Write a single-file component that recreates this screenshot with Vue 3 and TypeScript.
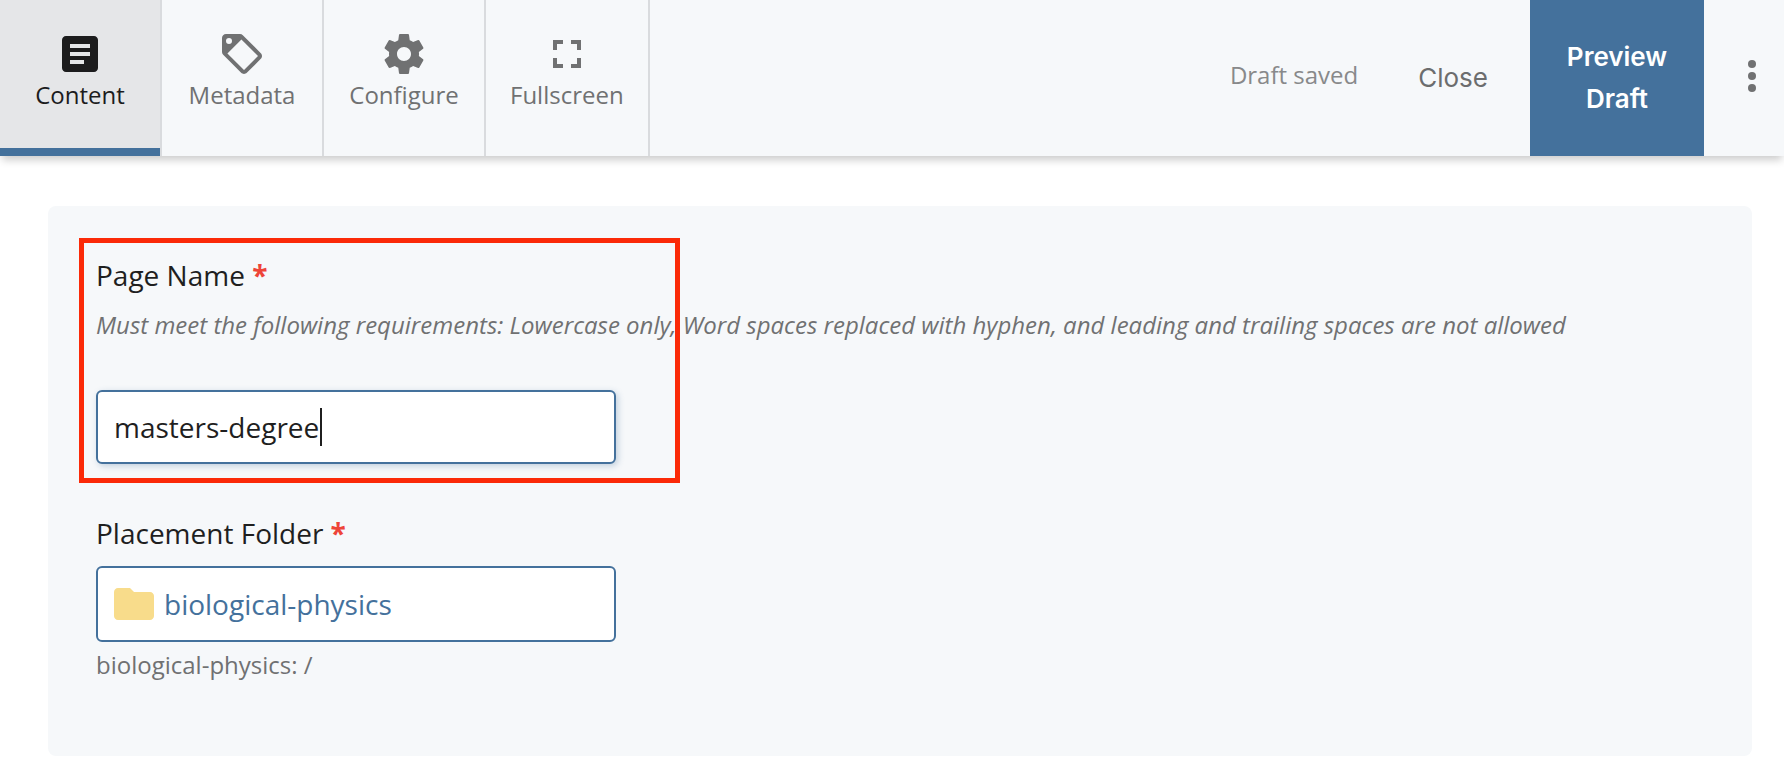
<script setup lang="ts">
import { ref } from 'vue'

interface Tab {
  id: string
  label: string
  icon: string
}

const tabs: Tab[] = [
  {
    id: 'content',
    label: 'Content',
    icon: 'M19 3H5c-1.1 0-2 .9-2 2v14c0 1.1.9 2 2 2h14c1.1 0 2-.9 2-2V5c0-1.1-.9-2-2-2zm-5 14H7v-2h7v2zm3-4H7v-2h10v2zm0-4H7V7h10v2z',
  },
  {
    id: 'metadata',
    label: 'Metadata',
    icon: 'M5.5 7A1.5 1.5 0 0 1 4 5.5A1.5 1.5 0 0 1 5.5 4A1.5 1.5 0 0 1 7 5.5A1.5 1.5 0 0 1 5.5 7M21.41 11.58L12.41 2.58C12.05 2.22 11.55 2 11 2H4C2.89 2 2 2.89 2 4V11C2 11.55 2.22 12.05 2.59 12.41L11.58 21.41C11.95 21.77 12.45 22 13 22C13.55 22 14.05 21.77 14.41 21.41L21.41 14.41C21.78 14.05 22 13.55 22 13C22 12.44 21.77 11.94 21.41 11.58M13 20L4.71 11.71L11.71 4.71L20 13L13 20Z',
  },
  {
    id: 'configure',
    label: 'Configure',
    icon: 'M19.43 12.98c.04-.32.07-.64.07-.98s-.03-.66-.07-.98l2.11-1.65c.19-.15.24-.42.12-.64l-2-3.46c-.12-.22-.39-.3-.61-.22l-2.49 1c-.52-.4-1.08-.73-1.69-.98l-.38-2.65C14.46 2.18 14.25 2 14 2h-4c-.25 0-.46.18-.49.42l-.38 2.65c-.61.25-1.17.59-1.69.98l-2.49-1c-.23-.09-.49 0-.61.22l-2 3.46c-.13.22-.07.49.12.64l2.11 1.65c-.04.32-.07.65-.07.98s.03.66.07.98l-2.11 1.65c-.19.15-.24.42-.12.64l2 3.46c.12.22.39.3.61.22l2.49-1c.52.4 1.08.73 1.69.98l.38 2.65c.03.24.24.42.49.42h4c.25 0 .46-.18.49-.42l.38-2.65c.61-.25 1.17-.59 1.69-.98l2.49 1c.23.09.49 0 .61-.22l2-3.46c.12-.22.07-.49-.12-.64l-2.11-1.65zM12 15.5c-1.93 0-3.5-1.57-3.5-3.5s1.57-3.5 3.5-3.5 3.5 1.57 3.5 3.5-1.57 3.5-3.5 3.5z',
  },
  {
    id: 'fullscreen',
    label: 'Fullscreen',
    icon: 'M7 14H5v5h5v-2H7v-3zm-2-4h2V7h3V5H5v5zm12 7h-3v2h5v-5h-2v3zM14 5v2h3v3h2V5h-5z',
  },
]

const activeTab = ref('content')
const pageName = ref('masters-degree')
const folder = ref('biological-physics')
</script>

<template>
  <div class="editor">
    <header class="toolbar">
      <nav class="tabs" aria-label="Editor sections">
        <button
          v-for="tab in tabs"
          :key="tab.id"
          type="button"
          class="tab"
          :class="{ active: tab.id === activeTab }"
          @click="activeTab = tab.id"
        >
          <svg class="icon" viewBox="0 0 24 24" aria-hidden="true">
            <path fill-rule="evenodd" :d="tab.icon" />
          </svg>
          <span>{{ tab.label }}</span>
        </button>
      </nav>
      <div class="actions">
        <span class="status">Draft saved</span>
        <button type="button" class="close">Close</button>
        <button type="button" class="preview">Preview Draft</button>
        <button type="button" class="more" aria-label="More">
          <svg class="icon" viewBox="0 0 24 24" aria-hidden="true">
            <circle cx="12" cy="6" r="2" />
            <circle cx="12" cy="12" r="2" />
            <circle cx="12" cy="18" r="2" />
          </svg>
        </button>
      </div>
    </header>

    <main class="panel">
      <section class="field highlighted">
        <label class="label" for="page-name">Page Name <b class="required">*</b></label>
        <p id="page-name-hint" class="hint">
          Must meet the following requirements: Lowercase only, Word spaces replaced with hyphen, and leading and trailing spaces are not allowed
        </p>
        <div class="input-wrap">
          <input id="page-name" v-model="pageName" class="text-input" type="text" aria-describedby="page-name-hint" />
          <span class="caret" aria-hidden="true"></span>
        </div>
      </section>

      <section class="field">
        <label class="label" for="folder">Placement Folder <b class="required">*</b></label>
        <button id="folder" type="button" class="chooser">
          <svg class="icon folder" viewBox="0 0 24 24" aria-hidden="true">
            <path d="M10 4H4c-1.1 0-1.99.9-1.99 2L2 18c0 1.1.9 2 2 2h16c1.1 0 2-.9 2-2V8c0-1.1-.9-2-2-2h-8l-2-2z" />
          </svg>
          <span>{{ folder }}</span>
        </button>
        <p class="path">{{ folder }}: /</p>
      </section>
    </main>
  </div>
</template>

<style>
body {
  margin: 0;
  background: #fff;
}
</style>

<style scoped>
.editor {
  font-family: 'Open Sans', 'Noto Sans', sans-serif;
  color: #1f1f1f;
}

button {
  margin: 0;
  padding: 0;
  border: 0;
  background: none;
  color: inherit;
  font: inherit;
  cursor: pointer;
}

p {
  margin: 0;
}

.icon {
  display: block;
  flex: none;
  width: 48px;
  height: 48px;
  fill: currentColor;
}

.toolbar {
  display: flex;
  justify-content: space-between;
  min-height: 156px;
  background: #f6f8fa;
  box-shadow: 0 6px 8px -2px rgba(0, 0, 0, 0.2);
}

.tabs,
.actions {
  display: flex;
}

.tab {
  display: flex;
  flex-direction: column;
  align-items: center;
  min-width: 162px;
  padding: 30px 24px 0;
  box-sizing: border-box;
  border-right: 2px solid #d9dbde;
  color: #707172;
  font-size: 24px;
  line-height: 34px;
}

.tab.active {
  color: #1c1c1d;
  background:
    linear-gradient(#44719c, #44719c) bottom / 100% 8px no-repeat padding-box,
    #e5e6e8;
}

.actions {
  align-items: center;
}

.status {
  color: #88898a;
  font-size: 24px;
  line-height: 34px;
  padding-bottom: 6px;
  margin-right: 60px;
}

.close,
.preview {
  font-family: Inter, 'Liberation Sans', sans-serif;
  font-size: 26px;
  line-height: 42px;
}

.close {
  color: #6c6d6e;
  margin-right: 42px;
}

.preview {
  align-self: stretch;
  width: 174px;
  padding: 0 30px;
  background: #44719c;
  color: #fff;
  font-weight: 600;
}

.more {
  padding: 0 8px 4px 24px;
  color: #707172;
}

.panel {
  margin: 50px 32px 6px 48px;
  padding: 48px 48px 72px;
  border-radius: 8px;
  background: #f6f8fa;
}

.field {
  position: relative;
}

.field + .field {
  margin-top: 48px;
}

/* Callout frame round the page name field */
.highlighted::after {
  content: '';
  position: absolute;
  inset: -16px auto -19px -17px;
  width: 601px;
  box-sizing: border-box;
  border: 5px solid #fb2a08;
  pointer-events: none;
}

.label {
  display: block;
  font-size: 28px;
  line-height: 42px;
}

.required {
  color: #ee4438;
}

.hint {
  margin-top: 10px;
  color: #707172;
  font-size: 24px;
  font-style: italic;
  line-height: 38px;
}

.input-wrap {
  position: relative;
  max-width: 520px;
  margin-top: 46px;
}

.text-input,
.chooser {
  display: flex;
  align-items: center;
  width: 100%;
  box-sizing: border-box;
  border: 2px solid #44719c;
  border-radius: 6px;
  background: #fff;
  font-size: 28px;
}

.text-input {
  height: 74px;
  margin: 0;
  padding: 0 16px;
  color: #1f1f1f;
  font-family: inherit;
  outline: none;
  box-shadow: 2px 2px 6px rgba(68, 113, 156, 0.3);
}

.caret {
  position: absolute;
  top: 18px;
  left: 224px;
  width: 2px;
  height: 38px;
  background: #1f1f1f;
}

.chooser {
  gap: 6px;
  max-width: 520px;
  height: 76px;
  margin-top: 12px;
  padding: 0 12px;
  color: #44719c;
}

.folder {
  color: #f8dc8b;
}

.path {
  margin-top: 4px;
  color: #707172;
  font-size: 24px;
  line-height: 38px;
}
</style>
